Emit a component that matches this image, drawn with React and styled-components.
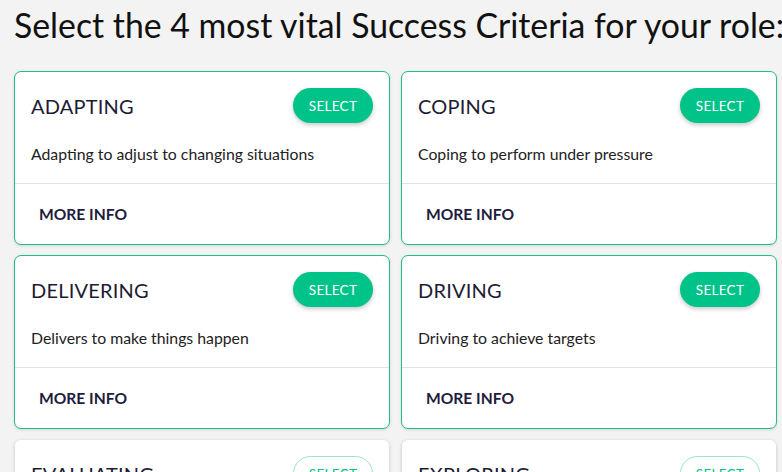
import React from 'react';
import styled, { createGlobalStyle } from 'styled-components';

const GlobalStyle = createGlobalStyle`
  body {
    margin: 0;
    background: #f3f3f3;
    font-family: Lato, "Open Sans", sans-serif;
    color: #1c1c34;
  }
`;

const Page = styled.div`
  padding: 0 14px;
`;

const Heading = styled.h1`
  margin: 0;
  padding-top: 5px;
  height: 66px;
  font-size: 33.8px;
  font-weight: 400;
  color: #111;
  white-space: nowrap;
`;

const Grid = styled.div`
  display: grid;
  grid-template-columns: 376px 376px;
  column-gap: 11px;
  row-gap: 10px;
`;

const Card = styled.div`
  background: #fff;
  background-clip: padding-box;
  border: 1px solid ${p => (p.$selected ? '#21bf86' : 'transparent')};
  border-radius: 7px;
  box-shadow: 0 1px 3px rgba(0, 0, 0, 0.12);
  display: flex;
  flex-direction: column;
`;

const Header = styled.div`
  display: flex;
  align-items: center;
  justify-content: space-between;
  padding: 16px 16px 0;
`;

const Title = styled.div`
  font-size: 20px;
  letter-spacing: 0.2px;
  color: #1c1c34;
`;

const SelectButton = styled.button`
  width: 80px;
  height: 35px;
  border-radius: 18px;
  font-family: inherit;
  font-size: 13.5px;
  letter-spacing: 0.3px;
  cursor: pointer;
  ${p =>
    p.$filled
      ? `
    background: #00c389;
    color: #fff;
    border: none;
    box-shadow: 0 2px 4px rgba(0, 0, 0, 0.22);
  `
      : `
    background: #fff;
    color: #00c389;
    border: 1px solid #9de3c8;
  `}
`;

const Description = styled.div`
  padding: 21px 16px 19px;
  font-size: 15.8px;
  line-height: 20px;
  color: #222;
`;

const Footer = styled.div`
  border-top: 1px solid #e2e2e2;
  padding: 12px 8px;
`;

const MoreButton = styled.button`
  height: 36px;
  padding: 0 16px;
  background: none;
  border: none;
  font-family: inherit;
  font-size: 15.6px;
  font-weight: 700;
  color: #1e1d3d;
  cursor: pointer;
`;

const criteria = [
  { name: 'ADAPTING', text: 'Adapting to adjust to changing situations', selected: true },
  { name: 'COPING', text: 'Coping to perform under pressure', selected: true },
  { name: 'DELIVERING', text: 'Delivers to make things happen', selected: true },
  { name: 'DRIVING', text: 'Driving to achieve targets', selected: true },
  { name: 'EVALUATING', text: 'Evaluating to make sound judgements', selected: false },
  { name: 'EXPLORING', text: 'Exploring to generate new ideas', selected: false },
];

export default function App() {
  return (
    <Page>
      <GlobalStyle />
      <Heading>Select the 4 most vital Success Criteria for your role:</Heading>
      <Grid>
        {criteria.map(c => (
          <Card key={c.name} $selected={c.selected}>
            <Header>
              <Title>{c.name}</Title>
              <SelectButton $filled={c.selected}>SELECT</SelectButton>
            </Header>
            <Description>{c.text}</Description>
            <Footer>
              <MoreButton>MORE INFO</MoreButton>
            </Footer>
          </Card>
        ))}
      </Grid>
    </Page>
  );
}
